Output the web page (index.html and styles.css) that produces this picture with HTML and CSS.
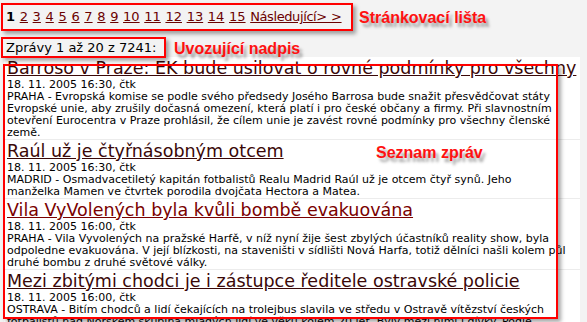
FILE: index.html
```html
<!DOCTYPE html>
<html lang="cs">

<head>
    <meta charset="UTF-8">
    <meta name="viewport" content="width=device-width, initial-scale=1.0">
    <title>Zprávy</title>
    <link rel="stylesheet" href="styles.css">
</head>

<body>
    <div class="pager">
        <b>1</b>
        <a href="#">2</a> <a href="#">3</a> <a href="#">4</a> <a href="#">5</a> <a href="#">6</a>
        <a href="#">7</a> <a href="#">8</a> <a href="#">9</a> <a href="#">10</a> <a href="#">11</a>
        <a href="#">12</a> <a href="#">13</a> <a href="#">14</a> <a href="#">15</a>
        <a class="next" href="#">Následující&gt; &gt;</a>
    </div>

    <div class="count">Zprávy 1 až 20 z 7241:</div>

    <div class="news">
        <div class="item">
            <a class="title" href="#">Barroso v Praze: EK bude usilovat o rovné podmínky pro všechny</a>
            <div class="date">18. 11. 2005 16:30, čtk</div>
            <p>PRAHA - Evropská komise se podle svého předsedy Josého Barrosa bude snažit přesvědčovat státy Evropské unie, aby zrušily dočasná omezení, která platí i pro české občany a firmy. Při slavnostním otevření Eurocentra v Praze prohlásil, že cílem unie je zavést rovné podmínky pro všechny členské země.</p>
        </div>
        <div class="item">
            <a class="title" href="#">Raúl už je čtyřnásobným otcem</a>
            <div class="date">18. 11. 2005 16:30, čtk</div>
            <p class="lines">MADRID - Osmadvacetiletý kapitán fotbalistů Realu Madrid Raúl už je otcem čtyř synů. Jeho<br>manželka Mamen ve čtvrtek porodila dvojčata Hectora a Matea.</p>
        </div>
        <div class="item">
            <a class="title fresh" href="#">Vila VyVolených byla kvůli bombě evakuována</a>
            <div class="date">18. 11. 2005 16:00, čtk</div>
            <p class="lines">PRAHA - Vila Vyvolených na pražské Harfě, v níž nyní žije šest zbylých účastníků reality show, byla<br>odpoledne evakuována. V její blízkosti, na staveništi v sídlišti Nová Harfa, totiž dělníci našli kolem půl<br>druhé bombu z druhé světové války.</p>
        </div>
        <div class="item">
            <a class="title" href="#">Mezi zbitými chodci je i zástupce ředitele ostravské policie</a>
            <div class="date">18. 11. 2005 16:00, čtk</div>
            <p>OSTRAVA - Bitím chodců a lidí čekajících na trolejbus slavila ve středu v Ostravě vítězství českých fotbalistů nad Norskem skupina mladých lidí ve věku kolem 20 let. Byly mezi nimi i dívky. Podle</p>
        </div>
    </div>

    <!-- popisky nad stránkou -->
    <div class="mark mark-pager"></div>
    <div class="mark mark-count"></div>
    <div class="mark mark-news"></div>
    <span class="label label-pager">Stránkovací lišta</span>
    <span class="label label-count">Uvozující nadpis</span>
    <span class="label label-news">Seznam zpráv</span>
</body>

</html>
```

FILE: styles.css
```css
body {
    font-family: 'DejaVu Sans', Verdana, sans-serif;
    margin: 0;
    padding: 0;
    background-color: #f3f3f3;
    color: #000;
    height: 322px;
    overflow: hidden;
    position: relative;
}

a {
    color: #6b0000;
}

.pager {
    font-size: 13px;
    line-height: 16px;
    padding: 9px 6px 0;
    height: 16px;
    word-spacing: 0.5px;
    white-space: nowrap;
}

.pager b {
    font-weight: bold;
}

.pager .next {
    letter-spacing: -0.4px;
}

.count {
    font-size: 13px;
    line-height: 16px;
    margin-top: 15px;
    padding-left: 6px;
}

.news {
    margin: 1px 7px 0 4px;
    background-color: #fff;
}

.item {
    padding: 0 0 0 3px;
    border-bottom: 1px solid #ececec;
}

.title {
    display: block;
    font-size: 17.5px;
    line-height: 22px;
    color: #3a0808;
    white-space: nowrap;
}

.title.fresh {
    color: #7a0000;
}

.date {
    font-size: 11px;
    line-height: 12px;
}

.item p {
    font-size: 11px;
    line-height: 12px;
    margin: 0;
}

.item p.lines {
    white-space: nowrap;
}

/* anotace */
.mark {
    position: absolute;
    box-sizing: border-box;
    border: 2px solid #ff0000;
    box-shadow: 3px 3px 4px rgba(0, 0, 0, 0.35);
}

.mark-pager {
    left: 1px;
    top: 3px;
    width: 352px;
    height: 28px;
}

.mark-count {
    left: 1px;
    top: 37px;
    width: 165px;
    height: 21px;
}

.mark-news {
    left: 3px;
    top: 64px;
    width: 555px;
    height: 255px;
}

.label {
    position: absolute;
    font-family: 'Liberation Sans', Arial, sans-serif;
    font-weight: bold;
    font-size: 16px;
    line-height: 20px;
    color: #ff1111;
    text-shadow: 3px 4px 3px rgba(0, 0, 0, 0.35);
    white-space: nowrap;
}

.label-pager {
    left: 359px;
    top: 8px;
}

.label-count {
    left: 174px;
    top: 39px;
}

.label-news {
    left: 376px;
    top: 143px;
}
```
